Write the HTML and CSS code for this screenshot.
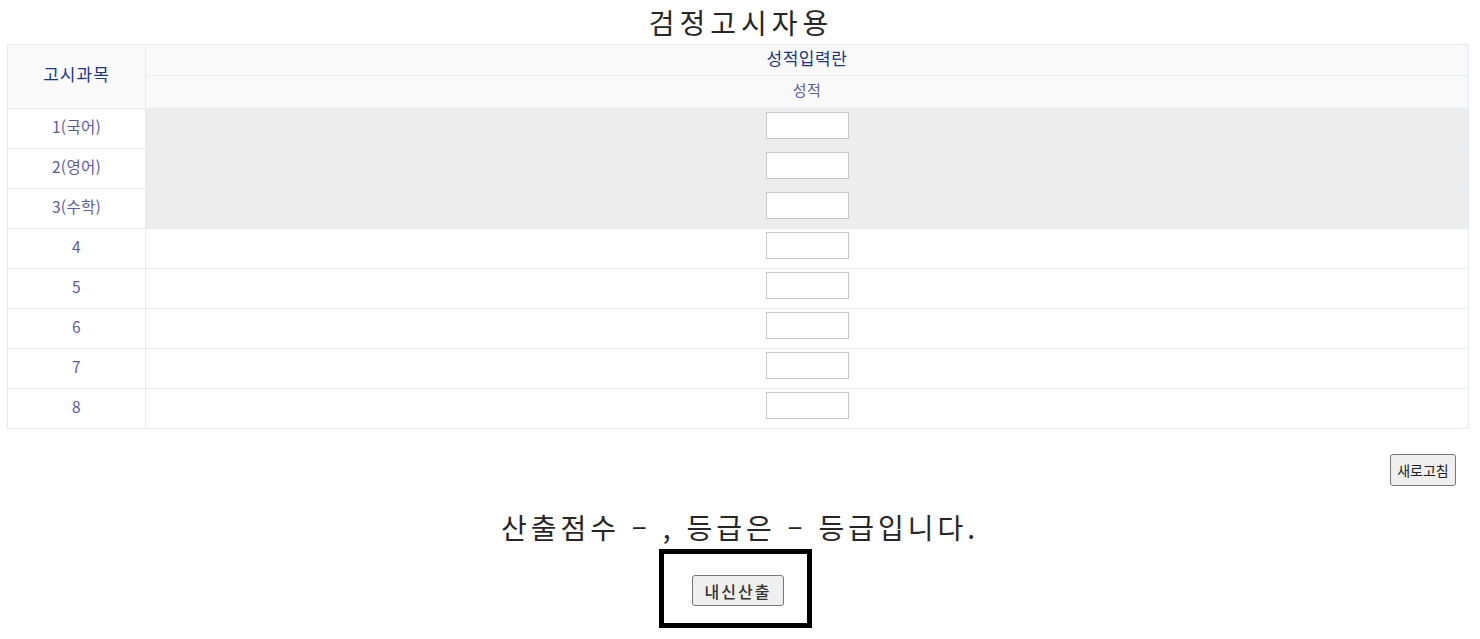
FILE: index.html
```html
<!DOCTYPE html>
<html lang="ko">
<head>
<meta charset="utf-8">
<title>검정고시자용</title>
<link rel="stylesheet" href="styles.css">
</head>
<body>
<h1 class="title">검정고시자용</h1>
<table class="grade-table">
  <thead>
    <tr class="head-1">
      <th class="subject-col" rowspan="2">고시과목</th>
      <th class="head-main">성적입력란</th>
    </tr>
    <tr class="head-2">
      <th class="head-sub">성적</th>
    </tr>
  </thead>
  <tbody>
    <tr class="row shaded"><td class="label">1(국어)</td><td class="field"><input class="score" type="text"></td></tr>
    <tr class="row shaded"><td class="label">2(영어)</td><td class="field"><input class="score" type="text"></td></tr>
    <tr class="row shaded"><td class="label">3(수학)</td><td class="field"><input class="score" type="text"></td></tr>
    <tr class="row"><td class="label">4</td><td class="field"><input class="score" type="text"></td></tr>
    <tr class="row"><td class="label">5</td><td class="field"><input class="score" type="text"></td></tr>
    <tr class="row"><td class="label">6</td><td class="field"><input class="score" type="text"></td></tr>
    <tr class="row"><td class="label">7</td><td class="field"><input class="score" type="text"></td></tr>
    <tr class="row"><td class="label">8</td><td class="field"><input class="score" type="text"></td></tr>
  </tbody>
</table>
<div class="refresh-bar"><button class="btn refresh" type="button">새로고침</button></div>
<p class="result">산출점수 – , 등급은 – 등급입니다.</p>
<div class="calc-wrap">
  <div class="calc-box"><button class="btn calc" type="button">내신산출</button></div>
</div>
</body>
</html>
```
FILE: styles.css
```css
html, body {
  margin: 0;
  padding: 0;
  background: #ffffff;
}
body {
  font-family: "Noto Sans CJK KR", "Noto Sans", sans-serif;
  color: #333;
}
.title {
  margin: 0;
  height: 44px;
  line-height: 44px;
  text-align: center;
  font-size: 28px;
  font-weight: 400;
  letter-spacing: 5px;
  padding-left: 2px;
  color: #262626;
}
.grade-table {
  margin: 0 11px 0 7px;
  width: calc(100% - 18px);
  border-collapse: collapse;
  table-layout: fixed;
}
.grade-table th,
.grade-table td {
  border: 1px solid #e6eaf8;
  text-align: center;
  vertical-align: top;
  padding: 0;
  font-weight: 400;
}
.grade-table .subject-col {
  width: 137px;
  background: #f9f9f9;
  font-size: 17px;
  letter-spacing: 1px;
  color: #1b3680;
  padding-top: 14px;
  line-height: 30px;
}
.head-1 th {
  height: 30px;
}
.head-main {
  background: #f9f9f9;
  font-size: 17px;
  letter-spacing: 0.6px;
  color: #1b3680;
  line-height: 25px;
}
.head-2 th {
  height: 32px;
}
.head-sub {
  background: #f9f9f9;
  font-size: 15px;
  letter-spacing: 0.5px;
  color: #5e5aa0;
  line-height: 27px;
}
.row td { height: 39px; }
.label {
  font-size: 15.5px;
  letter-spacing: 0.3px;
  color: #5e5aa0;
  background: #fff;
  line-height: 35px;
}
.field {
  background: #fff;
}
.shaded .field { background: #ededed; }
.field .score {
  display: block;
  margin: 3px auto 0;
  box-sizing: border-box;
  width: 83px;
  height: 27px;
  border: 1px solid #c8c8c8;
  background: #fff;
  padding: 0 4px;
}
.refresh-bar {
  display: flex;
  justify-content: flex-end;
  padding: 25px 24px 0 0;
}
.btn {
  font-family: "Noto Sans CJK KR", sans-serif;
  font-size: 14px;
  color: #222;
  background: #efefef;
  border: 1px solid #767676;
  border-radius: 3px;
  cursor: pointer;
}
.refresh {
  width: 66px;
  height: 32px;
  padding: 0;
}
.result {
  margin: 20px 0 0;
  height: 43px;
  line-height: 43px;
  text-align: center;
  font-size: 28px;
  letter-spacing: 4px;
  color: #262626;
}
.calc-wrap {
  display: flex;
  justify-content: center;
  padding-right: 9px;
}
.calc-box {
  box-sizing: border-box;
  width: 153px;
  height: 79px;
  border: 5px solid #000;
  display: flex;
  justify-content: center;
  align-items: flex-start;
  padding: 21px 0 0 5px;
}
.calc {
  width: 92px;
  height: 31px;
  padding: 0;
  font-size: 16px;
  letter-spacing: 2px;
  font-weight: 500;
  color: #333;
}
```
